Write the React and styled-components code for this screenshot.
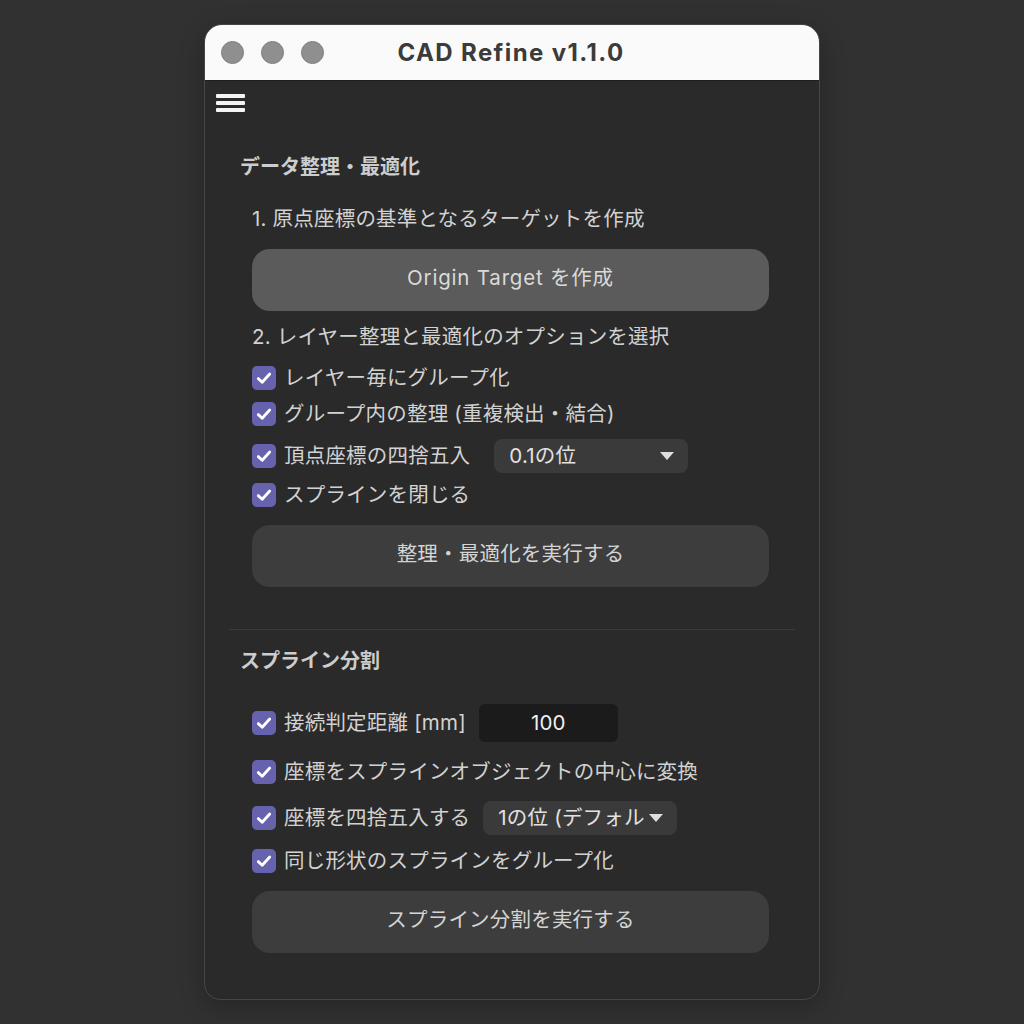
import React from 'react';
import styled, { createGlobalStyle } from 'styled-components';

const GlobalStyle = createGlobalStyle`
    html, body {
        margin: 0;
        padding: 0;
        background: #313131;
    }
    body {
        font-family: Inter, "Noto Sans CJK JP", sans-serif;
        -webkit-font-smoothing: antialiased;
    }
`;

const Page = styled.div`
    width: 1024px;
    height: 1024px;
    padding-top: 24px;
    box-sizing: border-box;
    display: flex;
    justify-content: center;
    align-items: flex-start;
`;

const Window = styled.div`
    width: 616px;
    height: 976px;
    box-sizing: border-box;
    background: #2a2a2a;
    border: 1px solid #464646;
    border-radius: 18px 18px 16px 16px;
    overflow: hidden;
    display: flex;
    flex-direction: column;
    box-shadow: 0 6px 24px rgba(0, 0, 0, 0.25);
`;

const TitleBar = styled.div`
    height: 56px;
    flex-shrink: 0;
    box-sizing: border-box;
    background: #fafafa;
    border-bottom: 1px solid #1e1e1e;
    position: relative;
    display: flex;
    align-items: center;
    justify-content: center;
`;

const Lights = styled.div`
    position: absolute;
    left: 16px;
    top: 16px;
    display: flex;
    gap: 17px;
`;

const Light = styled.span`
    width: 23px;
    height: 23px;
    border-radius: 50%;
    background: #8f8f8f;
    border: 1px solid #7f7f7f;
    box-sizing: border-box;
`;

const Title = styled.h1`
    margin: 0;
    font-size: 24px;
    font-weight: 700;
    color: #3b3b3b;
    letter-spacing: 1.4px;
    transform: translateX(-1px);
`;

const Toolbar = styled.div`
    padding: 13px 0 0 11px;
`;

const Hamburger = styled.div`
    width: 29px;
    height: 18px;
    display: flex;
    flex-direction: column;
    justify-content: space-between;
    & > span {
        display: block;
        height: 4px;
        border-radius: 1px;
        background: #f4f4f4;
    }
`;

const Main = styled.div`
    padding: 0 24px;
`;

const Section = styled.section`
    padding: ${p => p.$pad};
    border-bottom: ${p => (p.$divider ? '1px solid #3b3b3b' : 'none')};
`;

const Heading = styled.h2`
    margin: 0 0 ${p => p.$after}px 11px;
    font-size: 20px;
    line-height: 28px;
    font-weight: 700;
    color: #cdcdcd;
`;

const Body = styled.div`
    padding: 0 26px 0 23px;
    display: flex;
    flex-direction: column;
`;

const Step = styled.div`
    font-size: 20.5px;
    line-height: 28px;
    letter-spacing: 0.2px;
    color: #d2d2d2;
    margin-top: ${p => p.$top || 0}px;
`;

const Button = styled.button`
    display: block;
    width: 100%;
    height: 62px;
    padding: 0 0 4px;
    border: none;
    border-radius: 18px;
    background: ${p => (p.$primary ? '#5b5b5b' : '#3d3d3d')};
    color: ${p => (p.$primary ? '#dadada' : '#d4d4d4')};
    font-family: inherit;
    font-size: 20.5px;
    line-height: 28px;
    letter-spacing: ${p => (p.$primary ? '0.8px' : '0.2px')};
    cursor: pointer;
    margin-top: ${p => p.$top || 0}px;
`;

const Row = styled.label`
    display: flex;
    align-items: center;
    min-height: 28px;
    margin-top: ${p => p.$top}px;
    font-size: 20.5px;
    line-height: 28px;
    letter-spacing: 0.2px;
    color: #d2d2d2;
    white-space: nowrap;
`;

const Box = styled.span`
    width: 24px;
    height: 24px;
    flex-shrink: 0;
    border-radius: 5px;
    background: #6762ae;
    display: flex;
    align-items: center;
    justify-content: center;
    margin-right: 8px;
`;

const Select = styled.div`
    width: 194px;
    height: ${p => p.$h}px;
    margin-left: ${p => p.$gap}px;
    box-sizing: border-box;
    border-radius: 8px;
    background: #3a3a3a;
    display: flex;
    align-items: center;
    padding: 0 14px 0 15px;
    color: #e2e2e2;
    font-size: 20.5px;
`;

const SelectText = styled.span`
    flex: 1;
    overflow: hidden;
    white-space: nowrap;
`;

const Caret = styled.span`
    width: 0;
    height: 0;
    margin-left: 4px;
    border-left: 7px solid transparent;
    border-right: 7px solid transparent;
    border-top: 8px solid #dedede;
    flex-shrink: 0;
`;

const NumberInput = styled.div`
    width: 139px;
    height: 38px;
    margin-left: 13px;
    border-radius: 6px;
    background: #1b1b1b;
    color: #f0f0f0;
    font-size: 20.5px;
    display: flex;
    align-items: center;
    justify-content: center;
`;

const Check = () => (
    <Box>
        <svg width="16" height="16" viewBox="0 0 16 16">
            <path d="M2.3 8.6 L6.2 12.2 L13.7 4" fill="none" stroke="#fff" strokeWidth="2.8" strokeLinecap="round" strokeLinejoin="round" />
        </svg>
    </Box>
);

const Option = ({ label, top, children }) => (
    <Row $top={top}>
        <Check />
        {label}
        {children}
    </Row>
);

const App = () => (
    <>
        <GlobalStyle />
        <Page>
            <Window>
                <TitleBar>
                    <Lights>
                        <Light />
                        <Light />
                        <Light />
                    </Lights>
                    <Title>CAD Refine v1.1.0</Title>
                </TitleBar>
                <Toolbar>
                    <Hamburger>
                        <span />
                        <span />
                        <span />
                    </Hamburger>
                </Toolbar>
                <Main>
                    <Section $pad="41px 0 42px" $divider>
                        <Heading $after={24}>データ整理・最適化</Heading>
                        <Body>
                            <Step>1. 原点座標の基準となるターゲットを作成</Step>
                            <Button $primary $top={16}>Origin Target を作成</Button>
                            <Step $top={12}>2. レイヤー整理と最適化のオプションを選択</Step>
                            <Option label="レイヤー毎にグループ化" top={13} />
                            <Option label="グループ内の整理 (重複検出・結合)" top={8} />
                            <Option label="頂点座標の四捨五入" top={11}>
                                <Select $h={34} $gap={24}>
                                    <SelectText>0.1の位</SelectText>
                                    <Caret />
                                </Select>
                            </Option>
                            <Option label="スプラインを閉じる" top={8} />
                            <Button $top={16}>整理・最適化を実行する</Button>
                        </Body>
                    </Section>
                    <Section $pad="17px 0 0">
                        <Heading $after={29}>スプライン分割</Heading>
                        <Body>
                            <Option label="接続判定距離 [mm]" top={0}>
                                <NumberInput>100</NumberInput>
                            </Option>
                            <Option label="座標をスプラインオブジェクトの中心に変換" top={16} />
                            <Option label="座標を四捨五入する" top={15}>
                                <Select $h={34} $gap={13}>
                                    <SelectText>1の位 (デフォルト)</SelectText>
                                    <Caret />
                                </Select>
                            </Option>
                            <Option label="同じ形状のスプラインをグループ化" top={12} />
                            <Button $top={16}>スプライン分割を実行する</Button>
                        </Body>
                    </Section>
                </Main>
            </Window>
        </Page>
    </>
);

export default App;
